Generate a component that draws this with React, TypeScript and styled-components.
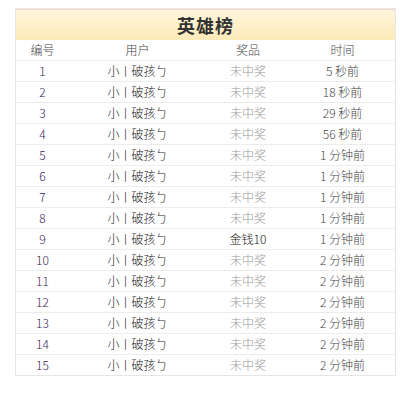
import React from "react";
import styled, { createGlobalStyle } from "styled-components";

const Global = createGlobalStyle`
  html, body { margin: 0; padding: 0; background: #fff; }
  body { font-family: "Noto Sans CJK SC", "Noto Sans", sans-serif; }
`;

const Page = styled.div`
  padding: 8px 0 0 15px;
`;

const Board = styled.div`
  width: 381px;
  box-sizing: border-box;
  border: 1px solid #e6e6e6;
  background: #fff;
`;

const Title = styled.div`
  height: 30px;
  border-top: 1px solid #fbd3c0;
  background: linear-gradient(#fef6dc, #fdeab8);
  display: flex;
  align-items: center;
  justify-content: center;
  font-size: 18px;
  font-weight: bold;
  color: #333;
  letter-spacing: 1px;
`;

const Row = styled.div<{ $head?: boolean }>`
  display: grid;
  grid-template-columns: 53px 137px 84px 1fr;
  height: 20px;
  border-top: ${(p) => (p.$head ? "none" : "1px solid #ececec")};
  font-size: 12px;
  font-weight: 300;
  line-height: 20px;
  text-align: center;
`;

const Cell = styled.div<{ $color?: string }>`
  color: ${(p) => p.$color || "#1a1a1a"};
  white-space: nowrap;
`;

const rows = [
  ["5 秒前", "未中奖"],
  ["18 秒前", "未中奖"],
  ["29 秒前", "未中奖"],
  ["56 秒前", "未中奖"],
  ["1 分钟前", "未中奖"],
  ["1 分钟前", "未中奖"],
  ["1 分钟前", "未中奖"],
  ["1 分钟前", "未中奖"],
  ["1 分钟前", "金钱10"],
  ["2 分钟前", "未中奖"],
  ["2 分钟前", "未中奖"],
  ["2 分钟前", "未中奖"],
  ["2 分钟前", "未中奖"],
  ["2 分钟前", "未中奖"],
  ["2 分钟前", "未中奖"],
];

export default function App() {
  return (
    <Page>
      <Global />
      <Board>
        <Title>英雄榜</Title>
        <Row $head>
          <Cell $color="#444">编号</Cell>
          <Cell $color="#444">用户</Cell>
          <Cell $color="#444">奖品</Cell>
          <Cell $color="#444">时间</Cell>
        </Row>
        {rows.map(([time, prize], i) => (
          <Row key={i}>
            <Cell $color="#3a2254">{i + 1}</Cell>
            <Cell>小丨破孩ㄅ</Cell>
            <Cell $color={prize === "未中奖" ? "#999" : "#111"}>{prize}</Cell>
            <Cell $color="#444">{time}</Cell>
          </Row>
        ))}
      </Board>
    </Page>
  );
}
